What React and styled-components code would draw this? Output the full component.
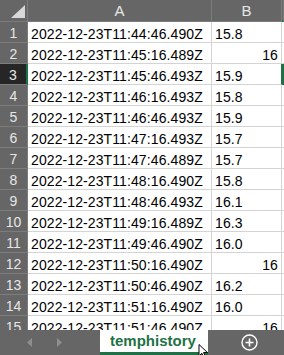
import React from 'react';
import styled, { createGlobalStyle } from 'styled-components';

const Global = createGlobalStyle`
  html, body { margin: 0; padding: 0; background: #ffffff; }
  body { font-family: "Liberation Sans", Arial, sans-serif; overflow: hidden; }
  * { box-sizing: border-box; }
`;

const Window = styled.div`
  width: 284px;
  height: 355px;
  display: flex;
  flex-direction: column;
  overflow: hidden;
  background: #ffffff;
`;

const Sheet = styled.div`
  flex: 1;
  min-height: 0;
  overflow: hidden;
  display: grid;
  grid-template-columns: 28px 184px 70px 2px;
  grid-template-rows: 22px;
  grid-auto-rows: 21px;
`;

const Corner = styled.div`
  background: #666666;
  border-right: 1px solid #7c7c7c;
  border-bottom: 1px solid #7c7c7c;
  position: relative;
  svg { display: block; }
`;

const ColHeader = styled.div`
  background: #666666;
  color: #e6e6e6;
  font-size: 15px;
  line-height: 21px;
  text-align: center;
  border-right: 1px solid #7c7c7c;
  border-bottom: ${p => (p.$selected ? '2px solid #1e7145' : '1px solid #7c7c7c')};
`;

const RowHeader = styled.div`
  background: ${p => (p.$selected ? '#262626' : '#666666')};
  color: #e6e6e6;
  font-size: 14px;
  line-height: 20px;
  padding-top: 1px;
  text-align: center;
  border-bottom: 1px solid #7c7c7c;
  border-right: ${p => (p.$selected ? '2px solid #1e7145' : '1px solid #7c7c7c')};
`;

const Cell = styled.div`
  color: #000000;
  font-size: 14px;
  letter-spacing: 0.1px;
  line-height: 20px;
  padding: 2px 3px 0 3px;
  white-space: nowrap;
  overflow: hidden;
  text-align: ${p => (p.$num ? 'right' : 'left')};
  border-bottom: 1px solid #d4d4d4;
  border-right: 1px solid ${p => (p.$edge ? '#1e7145' : '#d4d4d4')};
`;

const EdgeCell = styled.div`
  background: ${p => (p.$selected ? '#1e7145' : '#ffffff')};
  border-bottom: 1px solid ${p => (p.$selected ? '#1e7145' : '#d4d4d4')};
`;

const TabBar = styled.div`
  height: 25px;
  flex: none;
  display: flex;
  position: relative;
`;

const NavArea = styled.div`
  width: 100px;
  background: #666666;
  display: flex;
  align-items: center;
  padding-left: 27px;
  gap: 23px;
  svg { display: block; }
`;

const Tab = styled.div`
  width: 108px;
  background: #ffffff;
  color: #1e7145;
  font-weight: bold;
  font-size: 15px;
  padding-left: 10px;
  line-height: 22px;
  border-bottom: 3px solid #1e7145;
  margin-right: 0;
`;

const AddArea = styled.div`
  flex: 1;
  background: #666666;
  display: flex;
  align-items: center;
  padding-left: 33px;
  svg { display: block; }
`;

const Pointer = styled.svg`
  position: absolute;
  left: 198px;
  top: 14px;
`;

const rows = [
  ['2022-12-23T11:44:46.490Z', '15.8'],
  ['2022-12-23T11:45:16.489Z', '16', true],
  ['2022-12-23T11:45:46.493Z', '15.9'],
  ['2022-12-23T11:46:16.493Z', '15.8'],
  ['2022-12-23T11:46:46.493Z', '15.9'],
  ['2022-12-23T11:47:16.493Z', '15.7'],
  ['2022-12-23T11:47:46.489Z', '15.7'],
  ['2022-12-23T11:48:16.490Z', '15.8'],
  ['2022-12-23T11:48:46.493Z', '16.1'],
  ['2022-12-23T11:49:16.489Z', '16.3'],
  ['2022-12-23T11:49:46.490Z', '16.0'],
  ['2022-12-23T11:50:16.490Z', '16', true],
  ['2022-12-23T11:50:46.490Z', '16.2'],
  ['2022-12-23T11:51:16.490Z', '16.0'],
  ['2022-12-23T11:51:46.490Z', '16', true],
];

export default function App() {
  return (
    <>
      <Global />
      <Window>
        <Sheet>
          <Corner>
            <svg width="27" height="21" viewBox="0 0 27 21">
              <polygon points="11,18 25,18 25,5" fill="#d8d8d8" />
            </svg>
          </Corner>
          <ColHeader>A</ColHeader>
          <ColHeader>B</ColHeader>
          <ColHeader $selected />
          {rows.map(([a, b, num], i) => {
            const sel = i === 2;
            return (
              <React.Fragment key={i}>
                <RowHeader $selected={sel}>{i + 1}</RowHeader>
                <Cell>{a}</Cell>
                <Cell $num={num} $edge={sel}>{b}</Cell>
                <EdgeCell $selected={sel} />
              </React.Fragment>
            );
          })}
        </Sheet>
        <TabBar>
          <NavArea>
            <svg width="6" height="9" viewBox="0 0 6 9">
              <polygon points="5,0 5,9 0,4.5" fill="#8e8e8e" />
            </svg>
            <svg width="6" height="9" viewBox="0 0 6 9">
              <polygon points="1,0 1,9 6,4.5" fill="#8e8e8e" />
            </svg>
          </NavArea>
          <Tab>temphistory</Tab>
          <AddArea>
            <svg width="17" height="17" viewBox="0 0 17 17">
              <circle cx="8.5" cy="8.5" r="7.5" fill="none" stroke="#ffffff" strokeWidth="1.4" />
              <line x1="8.5" y1="4.5" x2="8.5" y2="12.5" stroke="#ffffff" strokeWidth="1.6" />
              <line x1="4.5" y1="8.5" x2="12.5" y2="8.5" stroke="#ffffff" strokeWidth="1.6" />
            </svg>
          </AddArea>
          <Pointer width="12" height="14" viewBox="0 0 12 14">
            <path d="M1 0.5 L1 12 L3.8 9.3 L6 13.5 L7.6 12.7 L5.5 8.6 L9.5 8.6 Z" fill="#ffffff" stroke="#000000" strokeWidth="1" strokeLinejoin="round" />
          </Pointer>
        </TabBar>
      </Window>
    </>
  );
}
